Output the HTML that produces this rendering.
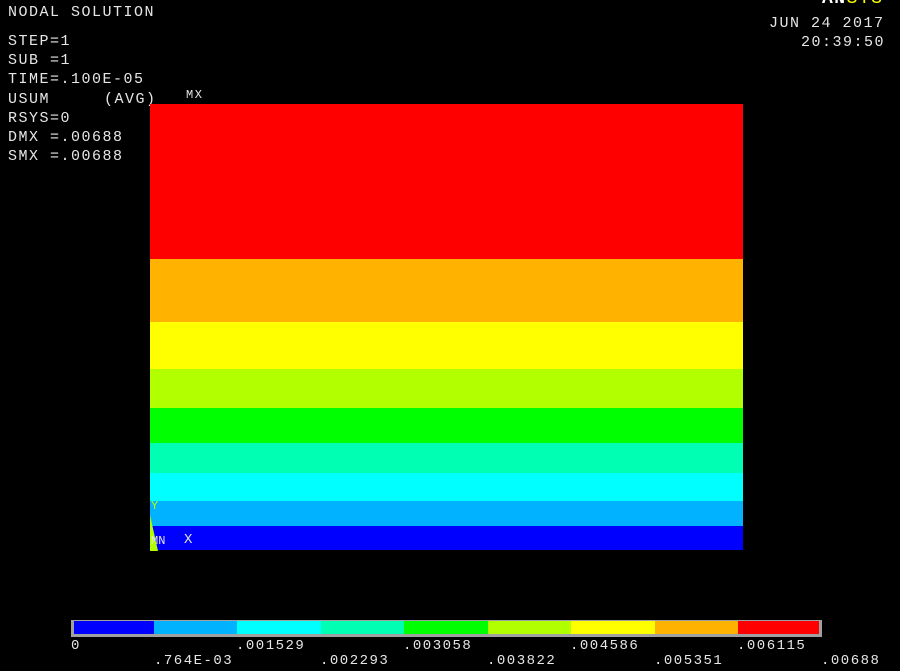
<!DOCTYPE html>
<html><head><style>
body{margin:0;width:900px;height:671px;background:#000;position:relative;overflow:hidden;font-family:"Liberation Mono",monospace;color:#e6e6e6}
.t{position:absolute;font-size:15px;letter-spacing:1.5px;line-height:1;white-space:pre}
.b{position:absolute;left:150px;width:593px}
.l{position:absolute;top:621px;height:13px}
</style></head><body>
<div class="t" style="left:8px;top:5px">NODAL SOLUTION</div>
<div class="t" style="left:8px;top:34px">STEP=1</div>
<div class="t" style="left:8px;top:53px">SUB =1</div>
<div class="t" style="left:8px;top:72px">TIME=.100E-05</div>
<div class="t" style="left:8px;top:92px">USUM</div>
<div class="t" style="left:104px;top:92px">(AVG)</div>
<div class="t" style="left:8px;top:111px">RSYS=0</div>
<div class="t" style="left:8px;top:130px">DMX =.00688</div>
<div class="t" style="left:8px;top:149px">SMX =.00688</div>
<div class="t" style="left:186px;top:89px;font-size:12px">MX</div>
<div class="t" style="left:769px;top:16px">JUN 24 2017</div>
<div class="t" style="left:801px;top:35px">20:39:50</div>
<div class="t" style="left:822px;top:-10px;font-size:18px;font-weight:bold;color:#fff">AN<span style="color:#ff0;font-weight:normal">SYS</span></div>

<div class="b" style="top:104px;height:155px;background:#ff0000"></div>
<div class="b" style="top:259px;height:63px;background:#ffb200"></div>
<div class="b" style="top:322px;height:47px;background:#ffff00"></div>
<div class="b" style="top:369px;height:39px;background:#b2ff00"></div>
<div class="b" style="top:408px;height:35px;background:#00ff00"></div>
<div class="b" style="top:443px;height:30px;background:#00ffb2"></div>
<div class="b" style="top:473px;height:28px;background:#00ffff"></div>
<div class="b" style="top:501px;height:25px;background:#00b2ff"></div>
<div class="b" style="top:526px;height:24px;background:#0000ff"></div>
<svg style="position:absolute;left:148px;top:515px" width="12" height="37"><polygon points="2,0 10,36 2,36" fill="#b2ff00"/></svg>
<div class="t" style="left:151px;top:500px;font-size:12px;color:#b2ff00">Y</div>
<div class="t" style="left:151px;top:535px;font-size:12px;letter-spacing:0">MN</div>
<div class="t" style="left:184px;top:533px;font-size:14px">X</div>

<div style="position:absolute;left:71px;top:620px;width:751px;height:17px;background:#a0a0a0"></div>
<div class="l" style="left:74px;width:80px;background:#0000ff"></div>
<div class="l" style="left:154px;width:83px;background:#00b2ff"></div>
<div class="l" style="left:237px;width:84px;background:#00ffff"></div>
<div class="l" style="left:321px;width:83px;background:#00ffb2"></div>
<div class="l" style="left:404px;width:84px;background:#00ff00"></div>
<div class="l" style="left:488px;width:83px;background:#b2ff00"></div>
<div class="l" style="left:571px;width:84px;background:#ffff00"></div>
<div class="l" style="left:655px;width:83px;background:#ffb200"></div>
<div class="l" style="left:738px;width:81px;background:#ff0000"></div>
<div class="t" style="left:71px;top:639px;font-size:14px">0</div>
<div class="t" style="left:154px;top:654px;font-size:14px">.764E-03</div>
<div class="t" style="left:236px;top:639px;font-size:14px">.001529</div>
<div class="t" style="left:320px;top:654px;font-size:14px">.002293</div>
<div class="t" style="left:403px;top:639px;font-size:14px">.003058</div>
<div class="t" style="left:487px;top:654px;font-size:14px">.003822</div>
<div class="t" style="left:570px;top:639px;font-size:14px">.004586</div>
<div class="t" style="left:654px;top:654px;font-size:14px">.005351</div>
<div class="t" style="left:737px;top:639px;font-size:14px">.006115</div>
<div class="t" style="left:821px;top:654px;font-size:14px">.00688</div>
</body></html>
